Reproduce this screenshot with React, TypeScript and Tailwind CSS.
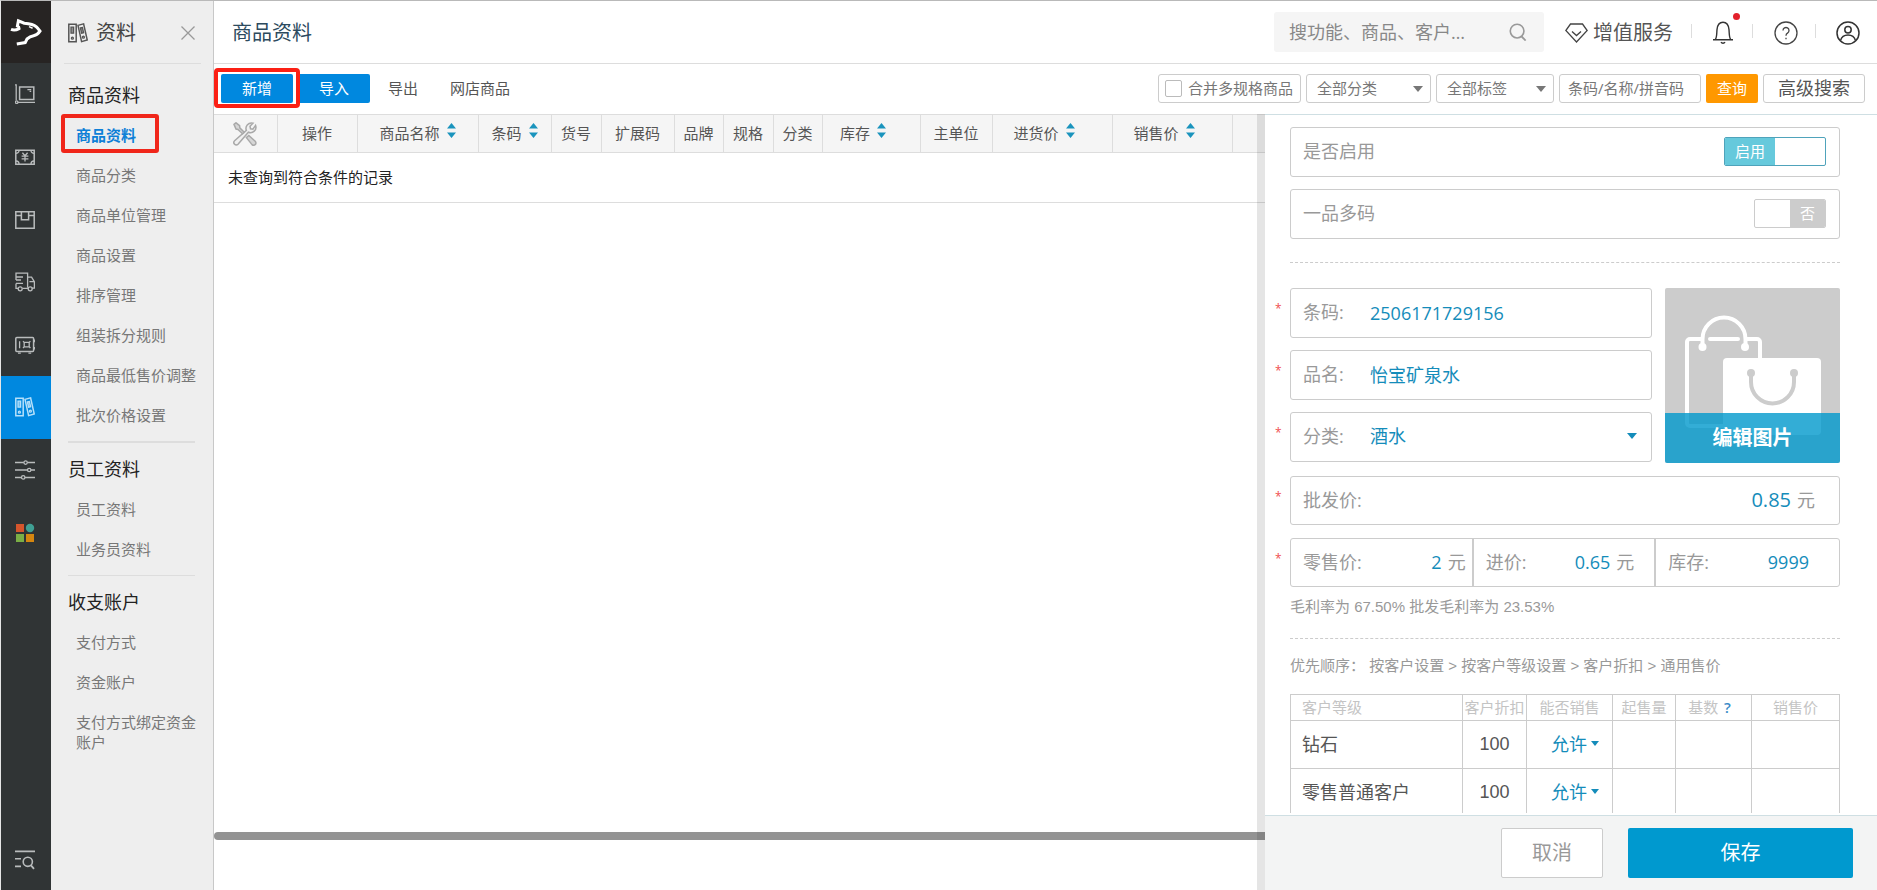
import type { ReactNode } from "react"
import clsx from "clsx"

interface NavSection {
  title: string
  items: string[]
}

interface Column {
  label: string
  width: string
  sortable?: boolean
  padded?: boolean
}

const SECTIONS: NavSection[] = [
  {
    title: "商品资料",
    items: [
      "商品资料",
      "商品分类",
      "商品单位管理",
      "商品设置",
      "排序管理",
      "组装拆分规则",
      "商品最低售价调整",
      "批次价格设置",
    ],
  },
  { title: "员工资料", items: ["员工资料", "业务员资料"] },
  { title: "收支账户", items: ["支付方式", "资金账户", "支付方式绑定资金账户"] },
]

const COLUMNS: Column[] = [
  { label: "操作", width: "w-20" },
  { label: "商品名称", width: "w-[121px]", sortable: true },
  { label: "条码", width: "w-[73px]", sortable: true },
  { label: "货号", width: "w-[50px]" },
  { label: "扩展码", width: "w-[73px]" },
  { label: "品牌", width: "w-[49px]" },
  { label: "规格", width: "w-[50px]" },
  { label: "分类", width: "w-[49px]" },
  { label: "库存", width: "w-[98px]", sortable: true, padded: true },
  { label: "主单位", width: "w-[72px]" },
  { label: "进货价", width: "w-[120px]", sortable: true, padded: true },
  { label: "销售价", width: "w-[120px]", sortable: true, padded: true },
]

const LEVELS = [
  { name: "钻石", discount: 100 },
  { name: "零售普通客户", discount: 100 },
]

/* ---------- Icons ---------- */
const Icon = ({ children, className }: { children: ReactNode; className?: string }) => (
  <svg
    viewBox="0 0 20 20"
    fill="none"
    stroke="currentColor"
    strokeWidth="1.3"
    className={clsx("size-5", className)}
    aria-hidden="true"
  >
    {children}
  </svg>
)

const BinderIcon = ({ className }: { className?: string }) => (
  <Icon className={className}>
    <path d="M.8 1.2h7.4v17.6H.8zM10 2.4l5.6-1.5 3.6 16-5.6 1.7z" strokeWidth="1.5" />
    <path d="M3 4.2h2.6v6H3zM12.4 5l2-.5 1.2 5.2-2 .5z" fill="currentColor" fillOpacity=".6" />
    <circle cx="4.4" cy="15.2" r="1" />
    <circle cx="15.4" cy="14.2" r="1" />
  </Icon>
)

const RAIL: { label: string; icon: ReactNode; active?: boolean }[] = [
  {
    label: "销售",
    icon: (
      <Icon>
        <path d="M0 .8h1.2v15.4M3 18.3h17" />
        <circle cx="1.6" cy="18.2" r="1.3" />
        <path d="M4.6 3h14.2v12.4H4.6z" strokeWidth="1.5" />
        <path d="M12.4 5.6h3.8M14.6 7.4h1.6" />
      </Icon>
    ),
  },
  {
    label: "资金",
    icon: (
      <Icon>
        <path d="M.8 3.2h18.4v14H.8z" strokeWidth="1.5" />
        <path d="M1 6.4a3 3 0 0 0 3-3M19 6.4a3 3 0 0 1-3-3M1 14a3 3 0 0 1 3 3M19 14a3 3 0 0 0-3 3" />
        <path d="m7.4 5.8 2.6 3 2.6-3M6.6 9.2h6.8M6.6 11.8h6.8M10 9v5.6" />
      </Icon>
    ),
  },
  {
    label: "库存",
    icon: (
      <Icon>
        <path d="M.8 1.8h18.4v16.4H.8zM.8 5.4h5.6M13.6 5.4h5.6" strokeWidth="1.5" />
        <path d="M6.4 1.8v8h7.2v-8" strokeWidth="1.5" />
      </Icon>
    ),
  },
  {
    label: "配送",
    icon: (
      <Icon>
        <path d="M1 8V1.2h11.6v14.2M12.6 5.2h4l2.8 4.6v6.4h-2.6M1 11.6v4.8h2M7.6 16.4h6M1 8h5M1 5h7M1 11.4h7M14.4 9.6h5" />
        <circle cx="5.2" cy="16.8" r="2" />
        <circle cx="15.2" cy="16.8" r="2" />
      </Icon>
    ),
  },
  {
    label: "财务",
    icon: (
      <Icon>
        <rect x=".8" y="2.4" width="17.8" height="14" rx="1" strokeWidth="1.5" />
        <path d="M4.6 6.2v7M3 18.2h2.8M13.4 18.2h2.8M19.6 4.6v2.6M19.6 12v2.6" />
        <path d="M9.2 7.4h5v4.4h-5zM9.2 7.4 8 6.2M14.2 7.4l1.2-1.2M9.2 11.8 8 13M14.2 11.8l1.2 1.2" />
      </Icon>
    ),
  },
  { label: "资料", icon: <BinderIcon />, active: true },
  {
    label: "设置",
    icon: (
      <Icon>
        <path d="M0 2.6h8.8M12.4 2.6H20M0 10h12.4M16 10h4M0 17.4h6.4M10 17.4h10" strokeWidth="1.5" />
        <circle cx="10.6" cy="2.6" r="1.7" />
        <circle cx="14.2" cy="10" r="1.7" />
        <circle cx="8.2" cy="17.4" r="1.7" />
      </Icon>
    ),
  },
  {
    label: "应用",
    icon: (
      <Icon>
        <g stroke="none">
          <path d="M1 1h8v8H1z" fill="#d5552c" />
          <circle cx="15" cy="5" r="4.2" fill="#3f9f93" />
          <path d="M1 11h8v8H1z" fill="#7aae45" />
          <path d="M11 11h8v8h-8z" fill="#d5860f" />
        </g>
      </Icon>
    ),
  },
]

const SortIcon = () => (
  <svg viewBox="0 0 9 15" className="mb-1.5 h-[15px] w-[9px] fill-[#1a94bd]" aria-hidden="true">
    <path d="M4.5 0 9 5.500H0zM0 9.500h9L4.500 15z" />
  </svg>
)

const ToolsIcon = () => (
  <svg viewBox="0 0 24 24" className="mx-auto size-6" fill="none" stroke="#a9a9a9" strokeWidth="1.5" aria-hidden="true">
    <path
      d="M22.6 3.4a5.4 5.4 0 0 1-7.2 6.8L5 22.2a2.4 2.4 0 0 1-3.4-3.4L13.4 8.4A5.4 5.4 0 0 1 20 1.2l-3 3 .5 2.6 2.4.3z"
      fill="#f0f0f0"
    />
    <path d="M1 2.4 3 .8l3.6 2.8.2 2.2 4.4 4.4-1.6 1.6L5 7.4l-2-.3zM13.4 15.6l2.4-2.2 6.4 5.8a2.3 2.3 0 0 1-3.2 3.4z" fill="#d6d6d6" />
  </svg>
)

const BagPicture = () => (
  <svg viewBox="0 0 175 175" className="block size-full" fill="none" aria-hidden="true">
    <path d="M0 0h175v175H0z" fill="#ccc" />
    <g stroke="#fff" strokeWidth="4" strokeLinecap="round">
      <path d="M36 51H25a3 3 0 0 0-3 3v81a3 3 0 0 0 3 3h67a3 3 0 0 0 3-3V54a3 3 0 0 0-3-3H82M45 51h28" />
      <path d="M37.5 58v-7a21.5 21.5 0 0 1 43 0v7" />
    </g>
    <circle cx="37.5" cy="59" r="4" fill="#fff" />
    <circle cx="80" cy="59" r="4" fill="#fff" />
    <rect x="58" y="70" width="98" height="77" rx="4" fill="#fff" />
    <path d="M86 86v8a21.5 21.5 0 0 0 43 0v-8" stroke="#ccc" strokeWidth="4" />
    <circle cx="86" cy="85" r="4" fill="#ccc" />
    <circle cx="129" cy="85" r="4" fill="#ccc" />
  </svg>
)

const Caret = ({ className }: { className?: string }) => (
  <svg viewBox="0 0 10 6" className={clsx("pointer-events-none fill-current", className)} aria-hidden="true">
    <path d="M0 0h10L5 6z" />
  </svg>
)

/* ---------- Form parts ---------- */
const Row = ({ required, children }: { required?: boolean; children: ReactNode }) => (
  <div className="relative flex rounded-[3px] border border-[#ccc]">
    {required && <span className="absolute top-3 -left-4 text-xs text-[#f05050]">*</span>}
    {children}
  </div>
)

const TextField = ({ id, label, value }: { id: string; label: string; value: string }) => (
  <Row required>
    <label htmlFor={id} className="flex h-12 w-[79px] items-center pb-0.5 pl-3">
      {label}
    </label>
    <input id={id} defaultValue={value} className="min-w-0 flex-1 text-[#148cba] outline-none" />
  </Row>
)

const PriceField = ({
  id,
  label,
  value,
  unit,
  className,
  inputClass,
}: {
  id: string
  label: string
  value: string
  unit?: string
  className?: string
  inputClass?: string
}) => (
  <div className={clsx("flex h-[47px] items-center pb-0.5 pl-3", className)}>
    <label htmlFor={id}>{label}</label>
    <input
      id={id}
      defaultValue={value}
      className={clsx("w-0 min-w-0 flex-1 text-right text-[#148cba] outline-none", inputClass)}
    />
    {unit && <span className="ml-1.5">{unit}</span>}
  </div>
)

const Filter = ({ label, className }: { label: string; className: string }) => (
  <div className={clsx("relative", className)}>
    <select
      aria-label={label}
      className="h-[29px] w-full appearance-none rounded-[3px] border border-[#ccc] bg-white px-2.5 text-[15px] text-[#777] outline-none"
    >
      <option>{label}</option>
    </select>
    <Caret className="absolute top-3 right-2 h-1.5 w-2.5 text-[#777]" />
  </div>
)

const Rail = () => (
  <nav className="flex w-[50px] shrink-0 flex-col bg-[#303435] text-[#b9bcbd]">
    <a href="#" aria-label="首页" className="flex h-[62px] items-center justify-center bg-[#272423] text-white">
      <svg viewBox="0 0 32 28" className="h-7 w-8" fill="none" stroke="currentColor" strokeWidth="3" aria-hidden="true">
        <path d="M1 11.4c3 1.2 5.5.6 8-.8L8.6 8.8 7.4 8 8.4 2.8l5.8 2.4c5 .4 9.5 1.2 12.2 3.6 1.5 1.4 2.3 2.8 3.6 4.4-1.6 2.4-3.6 4-6.4 4.6-2.6.6-4.6 1.6-6.6 3.2l-1.8 3.6-8.4 1.4" />
        <path d="m19 8.6 3.6 1.6" strokeWidth="1.5" />
      </svg>
    </a>
    <div className="grid h-[501px] grid-rows-8">
      {RAIL.map(item => (
        <a
          key={item.label}
          href="#"
          aria-label={item.label}
          className={clsx("flex items-center justify-center pr-0.5", item.active && "bg-[#0088df] text-[#b5e0fa]")}
        >
          {item.icon}
        </a>
      ))}
    </div>
    <a href="#" aria-label="搜索菜单" className="mt-auto mb-5 flex justify-center pr-0.5">
      <Icon>
        <path d="M0 1.4h20M0 8.8h6M0 16.4h6" strokeWidth="1.6" />
        <circle cx="12.8" cy="11.8" r="4.6" strokeWidth="1.6" />
        <path d="m16 15.4 3 3.4" strokeWidth="1.8" />
      </Icon>
    </a>
  </nav>
)

const Sidebar = () => (
  <aside className="w-[163px] shrink-0 border-r border-[#c8c8c8] bg-[#eee] pl-[13px]">
    <div className="mr-3 flex h-[63px] items-center border-b border-[#ddd] pt-0.5 pr-1.5 pl-1">
      <BinderIcon className="mr-2 text-[#555]" />
      <h2 className="flex-1 text-xl text-[#444]">资料</h2>
      <button type="button" aria-label="关闭" className="text-[#999]">
        <svg viewBox="0 0 14 14" className="size-3.5" stroke="currentColor" strokeWidth="1.3" aria-hidden="true">
          <path d="m.5.5 13 13M13.5.5l-13 13" />
        </svg>
      </button>
    </div>
    <div className="pt-[11px] pr-[18px] pl-1">
      {SECTIONS.map((section, i) => (
        <section
          key={section.title}
          className={clsx(i === 1 && "mt-1.5 border-t-2 border-[#ddd] pt-1.5", i === 2 && "mt-1.5 border-t border-[#ddd] pt-1.5")}
        >
          <h3 className="text-lg leading-10 text-[#222]">{section.title}</h3>
          <ul>
            {section.items.map((item, j) => {
              const current = i === 0 && j === 0
              return (
                <li key={item} className="relative">
                  <a
                    href="#"
                    className={clsx(
                      "-mr-1 block py-2.5 pl-2 text-[15px] leading-5",
                      current ? "font-bold text-[#0f80d7]" : "text-[#777]",
                    )}
                  >
                    {item}
                  </a>
                  {current && (
                    <span className="pointer-events-none absolute -top-px -left-[7px] h-[39px] w-[98px] rounded-[3px] border-4 border-[#f0261a]" />
                  )}
                </li>
              )
            })}
          </ul>
        </section>
      ))}
    </div>
  </aside>
)

const Header = () => (
  <header className="flex h-[63px] shrink-0 items-center border-b border-[#ddd] pt-0.5 pr-[17px] pl-[18px] text-[#444]">
    <h1 className="flex-1 text-xl text-[#2c4a5e]">商品资料</h1>
    <label className="mb-0.5 flex h-10 w-[270px] items-center rounded-[3px] bg-[#f5f5f5] pr-[17px] pl-[15px]">
      <input
        aria-label="搜索"
        placeholder="搜功能、商品、客户…"
        className="min-w-0 flex-1 text-lg outline-none placeholder:text-[#888]"
      />
      <Icon className="size-[18px] text-[#999]">
        <circle cx="9" cy="9" r="7.6" strokeWidth="1.8" />
        <path d="m14 15 4.5 4.5" strokeWidth="2" />
      </Icon>
    </label>
    <a href="#" className="ml-[21px] flex items-center gap-[5px] text-xl text-[#555]">
      <svg viewBox="0 0 23 20" className="h-5 w-[23px]" fill="none" stroke="#444" strokeWidth="1.3" aria-hidden="true">
        <path d="M5.5 1h12l4.7 6.5L11.5 19 .8 7.5zM7 8.4l4.5 4.2L16 8.4" />
      </svg>
      增值服务
    </a>
    <span className="mb-1 ml-[18px] h-3.5 w-px bg-[#ddd]" />
    <button type="button" aria-label="消息" className="relative ml-5">
      <svg viewBox="0 0 22 24" className="h-6 w-[22px]" fill="none" stroke="#333" strokeWidth="1.4" aria-hidden="true">
        <path d="M1 18.8h20M3.2 18.6C5 16.5 4.6 13 5 8.6 5.4 4 7.6 1.2 11 1.2S16.600 4 17 8.600c.4 4.400 0 7.900 1.800 10M9 21.200c.8 1.300 3.200 1.300 4 0" />
      </svg>
      <span className="absolute -top-2 -right-1.5 size-[7px] rounded-full bg-[#e3202b]" />
    </button>
    <span className="mb-1 ml-[18px] h-3.5 w-px bg-[#ddd]" />
    <button type="button" aria-label="帮助" className="ml-[21px]">
      <svg viewBox="0 0 24 24" className="size-6" fill="none" stroke="#444" strokeWidth="1.3" aria-hidden="true">
        <circle cx="12" cy="12" r="11" />
        <path d="M9 9.5a3 3 0 1 1 4.5 2.6c-1 .6-1.500 1.200-1.500 2.600M12 16.800v1.400" />
      </svg>
    </button>
    <span className="mb-1 ml-[17px] h-3.5 w-px bg-[#ddd]" />
    <button type="button" aria-label="账户" className="ml-5">
      <svg viewBox="0 0 24 24" className="size-6" fill="none" stroke="#333" strokeWidth="1.5" aria-hidden="true">
        <circle cx="12" cy="12" r="11" />
        <circle cx="12" cy="8.8" r="3.2" />
        <path d="M4.5 19.6c1-3.8 3.8-5.6 7.5-5.6s6.5 1.8 7.5 5.6" />
      </svg>
    </button>
  </header>
)

const Toolbar = () => (
  <div className="flex h-[50px] shrink-0 items-center px-[7px] pb-0.5 text-[15px] text-[#555]">
    <div className="relative">
      <button type="button" className="block h-[29px] w-[72px] rounded-xs bg-[#0088df] text-white">
        新增
      </button>
      <span className="pointer-events-none absolute -inset-x-[7px] -top-1.5 -bottom-[5px] rounded border-4 border-[#fb2015]" />
    </div>
    <button type="button" className="ml-[5px] h-[29px] w-[72px] rounded-xs bg-[#0088df] text-white">
      导入
    </button>
    <button type="button" className="ml-[18px]">导出</button>
    <button type="button" className="ml-8">网店商品</button>
    <div className="ml-auto flex gap-[5px] pr-[5px] text-[#777]">
      <label className="flex h-[29px] w-[143px] items-center gap-1.5 rounded-[3px] border border-[#ccc] pl-1.5">
        <input type="checkbox" className="size-[17px] appearance-none rounded-xs border border-[#bbb]" />
        合并多规格商品
      </label>
      <Filter label="全部分类" className="w-[125px]" />
      <Filter label="全部标签" className="w-[118px]" />
      <input
        aria-label="关键字"
        placeholder="条码/名称/拼音码"
        className="h-[29px] w-[142px] rounded-[3px] border border-[#ccc] px-2 outline-none placeholder:text-[#777]"
      />
      <button type="button" className="h-[29px] w-[52px] rounded-xs bg-[#ff9800] text-white">
        查询
      </button>
      <button
        type="button"
        className="flex h-[29px] w-[102px] items-center justify-center rounded-[3px] border border-[#ccc] text-lg text-[#555]"
      >
        高级搜索
      </button>
    </div>
  </div>
)

const GoodsTable = () => (
  <div className="relative flex min-w-0 flex-1 flex-col overflow-hidden">
    <table className="w-full table-fixed border-collapse text-[15px]">
      <thead>
        <tr className="h-[38px] border-y border-[#ddd] bg-[#f5f5f5] text-[#555]">
          <th className="w-[63px] border-r border-[#ddd]">
            <ToolsIcon />
          </th>
          {COLUMNS.map(col => (
            <th key={col.label} className={clsx("border-r border-[#ddd] font-normal", col.width, col.padded && "pr-4")}>
              <div className="flex items-center justify-center gap-[7px] whitespace-nowrap">
                {col.label}
                {col.sortable && <SortIcon />}
              </div>
            </th>
          ))}
          <th />
        </tr>
      </thead>
      <tbody>
        <tr className="h-[50px] border-b border-[#ddd]">
          <td colSpan={14} className="pl-3.5 text-[#222]">
            未查询到符合条件的记录
          </td>
        </tr>
      </tbody>
    </table>
    <div className="mt-auto mb-[50px] h-2 rounded-l-full bg-[#939393]" />
    <div className="absolute inset-y-0 right-0 w-2 bg-black/10" />
  </div>
)

const LevelTable = () => (
  <table className="w-full table-fixed border-collapse border border-[#ccc] text-[#555]">
    <thead>
      <tr className="h-[26px] text-[15px] whitespace-nowrap text-[#c4c4c4] [&>th]:border [&>th]:border-[#ccc] [&>th]:font-normal">
        <th className="w-[172px] pl-[11px] text-left">客户等级</th>
        <th className="w-16">客户折扣</th>
        <th className="w-[86px]">能否销售</th>
        <th className="w-[63px]">起售量</th>
        <th className="w-[76px] pr-2">
          基数{" "}
          <button type="button" className="ml-0.5 font-semibold text-[#3a8bc8]">
            ?
          </button>
        </th>
        <th>销售价</th>
      </tr>
    </thead>
    <tbody>
      {LEVELS.map(level => (
        <tr key={level.name} className="h-12 [&>td]:border [&>td]:border-[#ccc] [&>td]:pb-0.5">
          <td className="pl-[11px]">{level.name}</td>
          <td className="text-center font-['Liberation_Sans']">{level.discount}</td>
          <td className="pl-6">
            <div className="relative w-12 text-[#148cba]">
              <select aria-label={`${level.name}能否销售`} className="w-full appearance-none outline-none">
                <option>允许</option>
              </select>
              <Caret className="absolute top-[11px] right-0 h-[5px] w-2" />
            </div>
          </td>
          <td />
          <td />
          <td />
        </tr>
      ))}
    </tbody>
  </table>
)

const EditPanel = () => (
  <form className="flex min-h-0 w-[612px] shrink-0 flex-col border-t border-[#cfdfe3] text-lg text-[#999]">
    <div className="mb-0.5 min-h-0 flex-1 overflow-hidden pt-3 pr-[37px] pl-[25px]">
      <div className="flex flex-col gap-3">
        <Row>
          <label htmlFor="enabled" className="flex h-12 flex-1 items-center pb-0.5 pl-3">
            是否启用
          </label>
          <label className="mt-[9px] mr-[13px] flex h-[29px] w-[102px] overflow-hidden rounded-xs border border-[#4fa3bb] text-[15px]">
            <input id="enabled" type="checkbox" role="switch" defaultChecked className="sr-only" />
            <span className="flex w-1/2 items-center justify-center bg-[#66c9dc] text-white">启用</span>
          </label>
        </Row>
        <Row>
          <label htmlFor="multi-code" className="flex h-12 flex-1 items-center pb-0.5 pl-3">
            一品多码
          </label>
          <label className="mt-[9px] mr-[13px] flex h-[29px] w-[72px] justify-end overflow-hidden rounded-xs border border-[#ccc] text-[15px]">
            <input id="multi-code" type="checkbox" role="switch" className="sr-only" />
            <span className="flex w-1/2 items-center justify-center bg-[#ccc] text-white">否</span>
          </label>
        </Row>
      </div>

      <div className="mt-[23px] mb-[25px] border-t border-dashed border-[#ccc]" />

      <div className="flex gap-[13px]">
        <div className="flex flex-1 flex-col gap-3">
          <TextField id="barcode" label="条码:" value="2506171729156" />
          <TextField id="name" label="品名:" value="怡宝矿泉水" />
          <Row required>
            <label htmlFor="category" className="flex h-12 w-[79px] items-center pb-0.5 pl-3">
              分类:
            </label>
            <select id="category" className="flex-1 appearance-none pb-0.5 text-[#148cba] outline-none">
              <option>酒水</option>
            </select>
            <Caret className="absolute top-5 right-3.5 h-1.5 w-2.5 text-[#148cba]" />
          </Row>
        </div>
        <div className="relative size-[175px] overflow-hidden rounded-xs">
          <BagPicture />
          <button type="button" className="absolute inset-x-0 bottom-0 h-[50px] bg-[#0099cc]/80 text-xl font-bold text-white">
            编辑图片
          </button>
        </div>
      </div>

      <div className="mt-[13px] flex flex-col gap-[13px]">
        <Row required>
          <PriceField
            id="wholesale"
            label="批发价:"
            value="0.85"
            unit="元"
            className="flex-1 pr-6"
            inputClass="text-xl font-medium"
          />
        </Row>
        <Row required>
          <div className="grid flex-1 grid-cols-3">
            <PriceField id="retail" label="零售价:" value="2" unit="元" className="border-r-2 border-[#ccc] pr-1.5" />
            <PriceField id="cost" label="进价:" value="0.65" unit="元" className="border-r-2 border-[#ccc] pr-5" />
            <PriceField id="stock" label="库存:" value="9999" className="pr-[30px]" />
          </div>
        </Row>
      </div>

      <p className="mt-2.5 font-['Liberation_Sans','Noto_Sans_CJK_SC',sans-serif] text-[15px] leading-5">
        毛利率为 67.50% 批发毛利率为 23.53%
      </p>
      <div className="mt-[21px] mb-[17px] border-t border-dashed border-[#ccc]" />
      <p className="mb-[18px] font-['Liberation_Sans','Noto_Sans_CJK_SC',sans-serif] text-[15px] leading-5">
        优先顺序： 按客户设置 &gt; 按客户等级设置 &gt; 客户折扣 &gt; 通用售价
      </p>
      <LevelTable />
    </div>
    <footer className="flex h-[75px] shrink-0 items-start justify-end gap-[25px] border-t border-[#cfdfe3] bg-[#f3f4f4] pt-3 pr-6 text-xl">
      <button type="button" className="h-[50px] w-[102px] rounded-xs border border-[#ccc] bg-white">
        取消
      </button>
      <button type="submit" className="h-[50px] w-[225px] rounded-xs bg-[#0099cf] text-white">
        保存
      </button>
    </footer>
  </form>
)

const App = () => (
  <div className="flex h-screen overflow-hidden border-t border-l border-t-[#b9b9b9] border-l-[#e6e6e6] bg-white font-['Open_Sans','Noto_Sans_CJK_SC',sans-serif]">
    <Rail />
    <Sidebar />
    <main className="flex min-w-0 flex-1 flex-col">
      <Header />
      <Toolbar />
      <div className="flex min-h-0 flex-1">
        <GoodsTable />
        <EditPanel />
      </div>
    </main>
  </div>
)

export default App
